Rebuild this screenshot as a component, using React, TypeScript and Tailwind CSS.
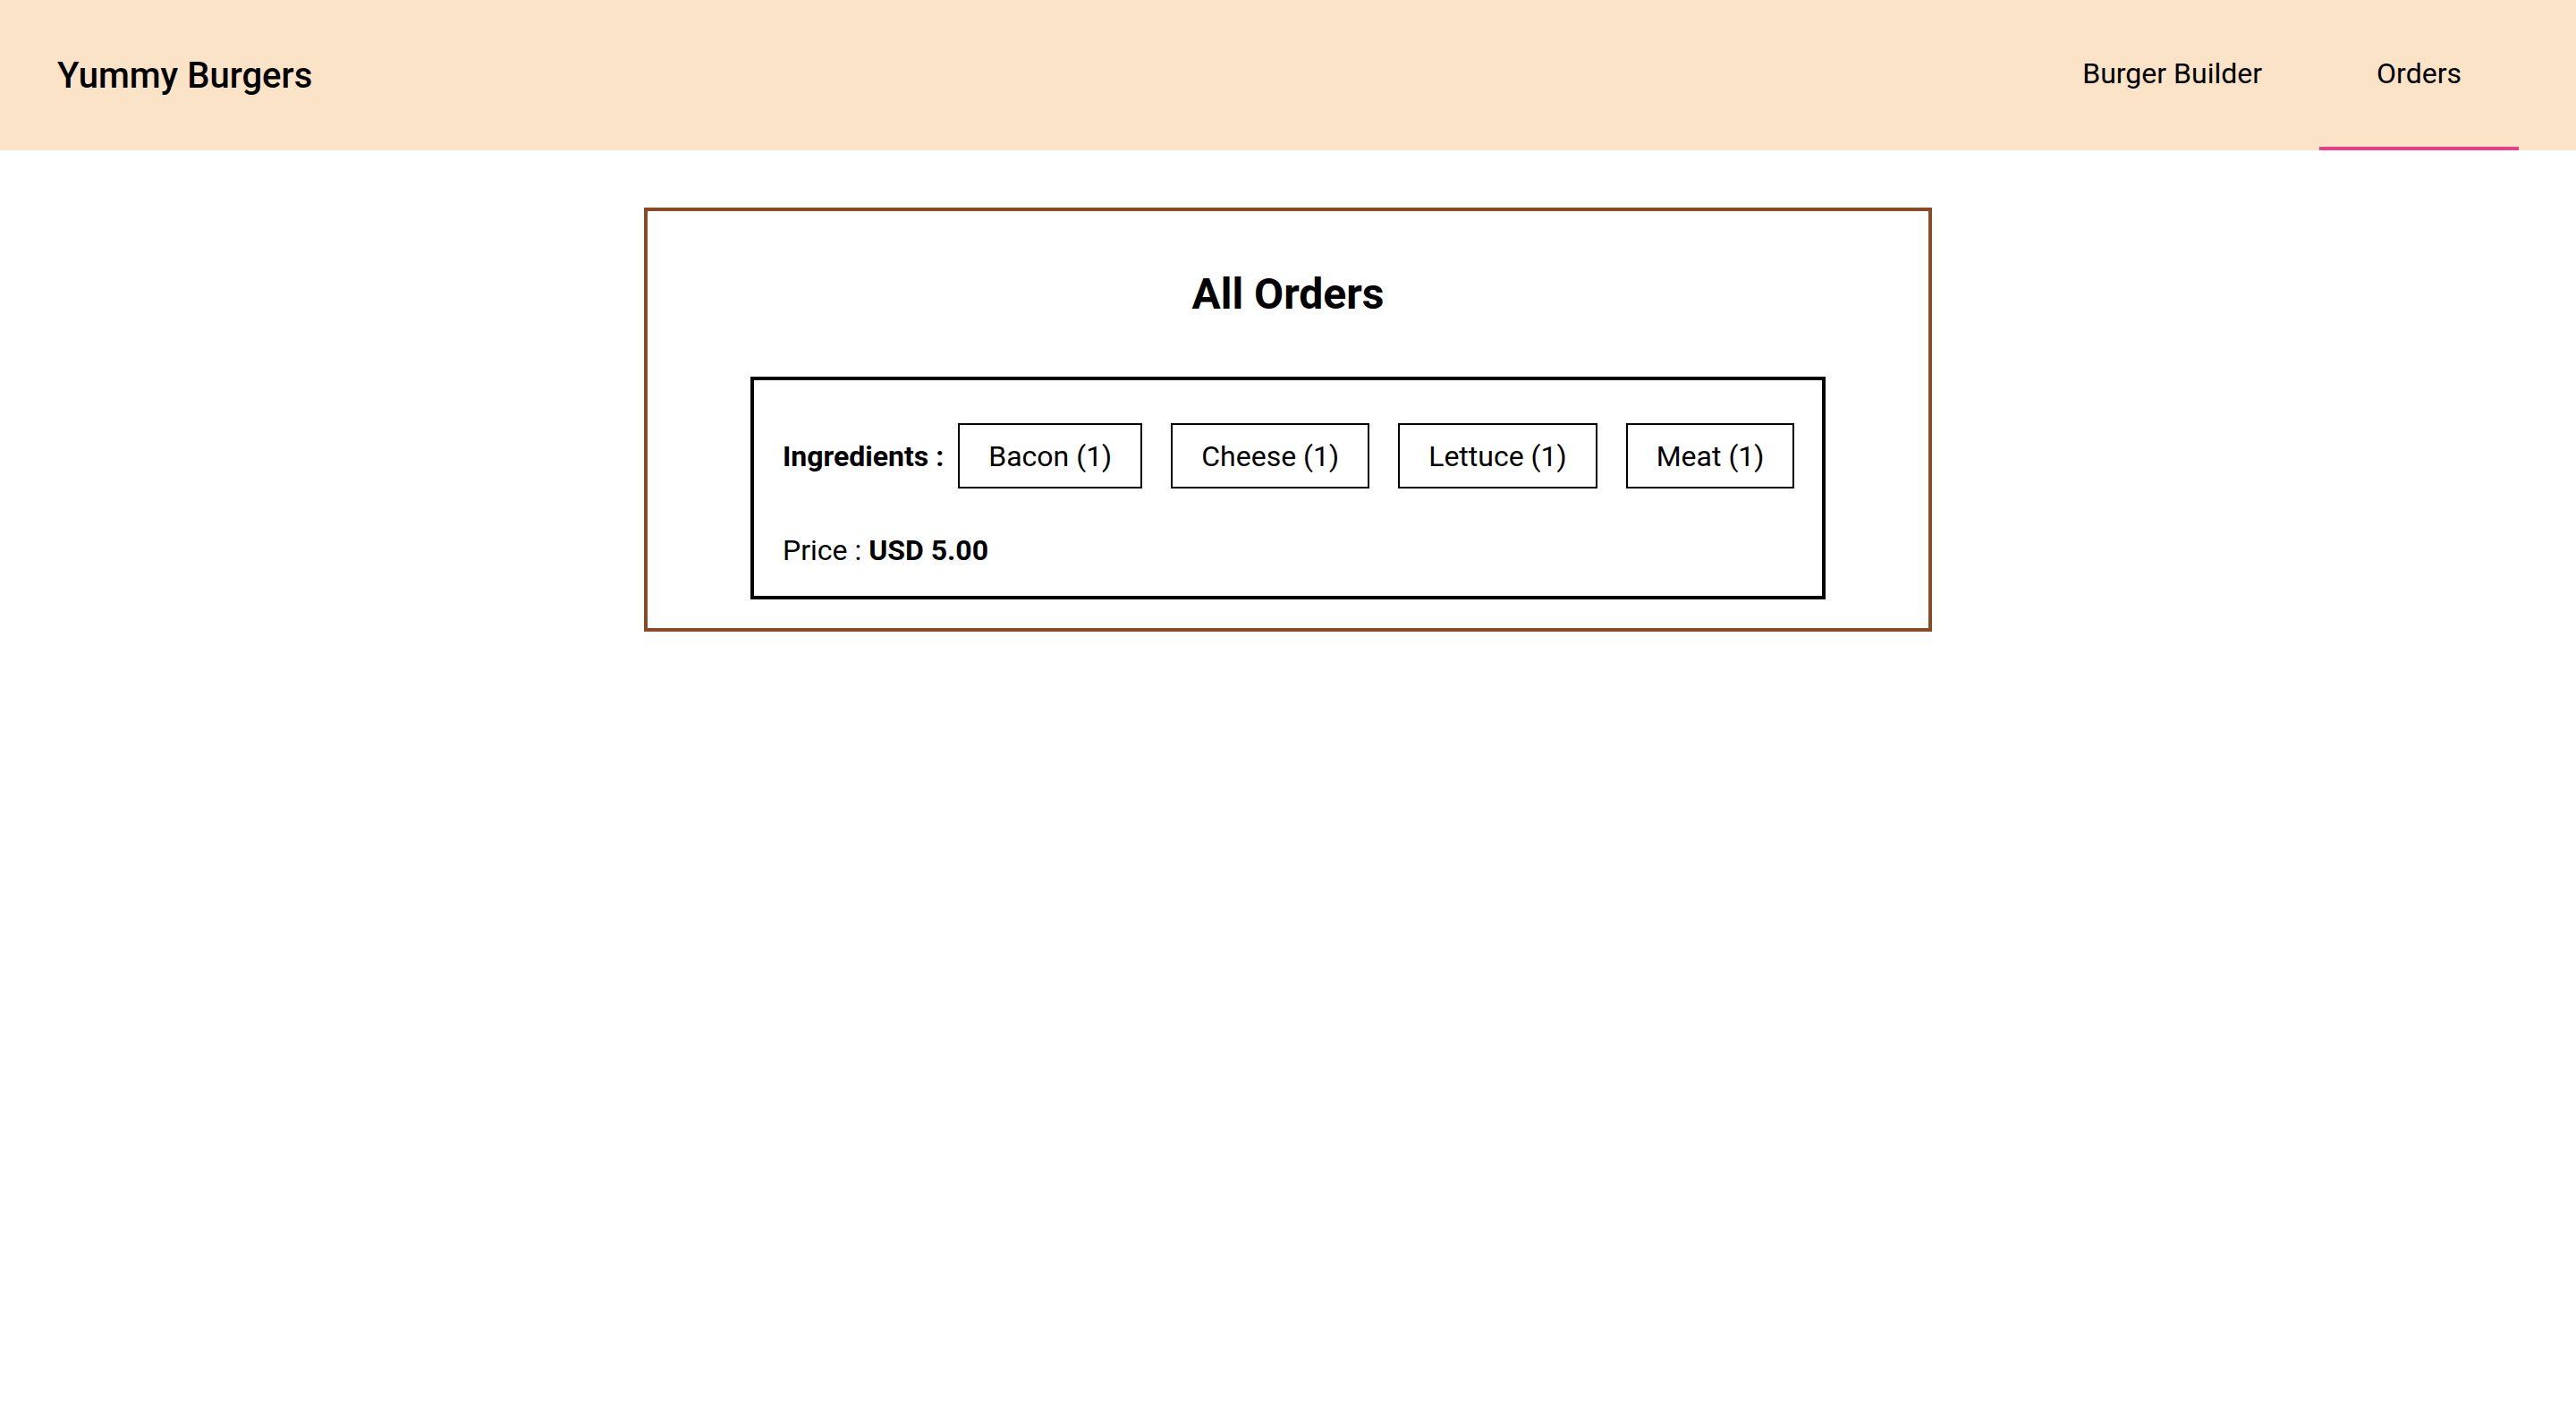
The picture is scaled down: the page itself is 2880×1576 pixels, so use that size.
const ingredients = [
  { name: "Bacon", amount: 1 },
  { name: "Cheese", amount: 1 },
  { name: "Lettuce", amount: 1 },
  { name: "Meat", amount: 1 },
];

function NavItem({ label, active }: { label: string; active?: boolean }) {
  return (
    <a
      href="#"
      className={
        active
          ? "flex h-full items-center px-16 border-b-4 border-[#e93e8b] text-[32px] text-black"
          : "flex h-full items-center px-16 border-b-4 border-transparent text-[32px] text-black"
      }
    >
      {label}
    </a>
  );
}

export default function App() {
  return (
    <div className="min-h-screen bg-white text-black font-['Roboto',sans-serif] leading-[normal]">
      <header className="flex h-[168px] items-center justify-between bg-[#fae3c7] px-16">
        <div className="text-[40px] font-medium">Yummy Burgers</div>
        <nav className="flex h-full whitespace-nowrap">
          <NavItem label="Burger Builder" />
          <NavItem label="Orders" active />
        </nav>
      </header>

      <main className="pt-16">
        <div className="mx-auto w-[1440px] border-4 border-[#8a4b22] pt-16 pb-8">
          <h1 className="mb-16 text-center text-[48px] font-bold">All Orders</h1>

          <div className="mx-auto w-[1202px] border-4 border-black px-8 pt-12 pb-8">
            <div className="flex items-center whitespace-nowrap text-[32px]">
              <span className="shrink-0 font-bold">Ingredients :</span>
              <div className="ml-4 flex gap-8">
                {ingredients.map((ing) => (
                  <span
                    key={ing.name}
                    className="flex h-[73px] shrink-0 items-center border-2 border-black px-8"
                  >
                    {ing.name} ({ing.amount})
                  </span>
                ))}
              </div>
            </div>
            <p className="mt-[50px] text-[32px]">
              Price : <strong className="font-bold">USD 5.00</strong>
            </p>
          </div>
        </div>
      </main>
    </div>
  );
}
